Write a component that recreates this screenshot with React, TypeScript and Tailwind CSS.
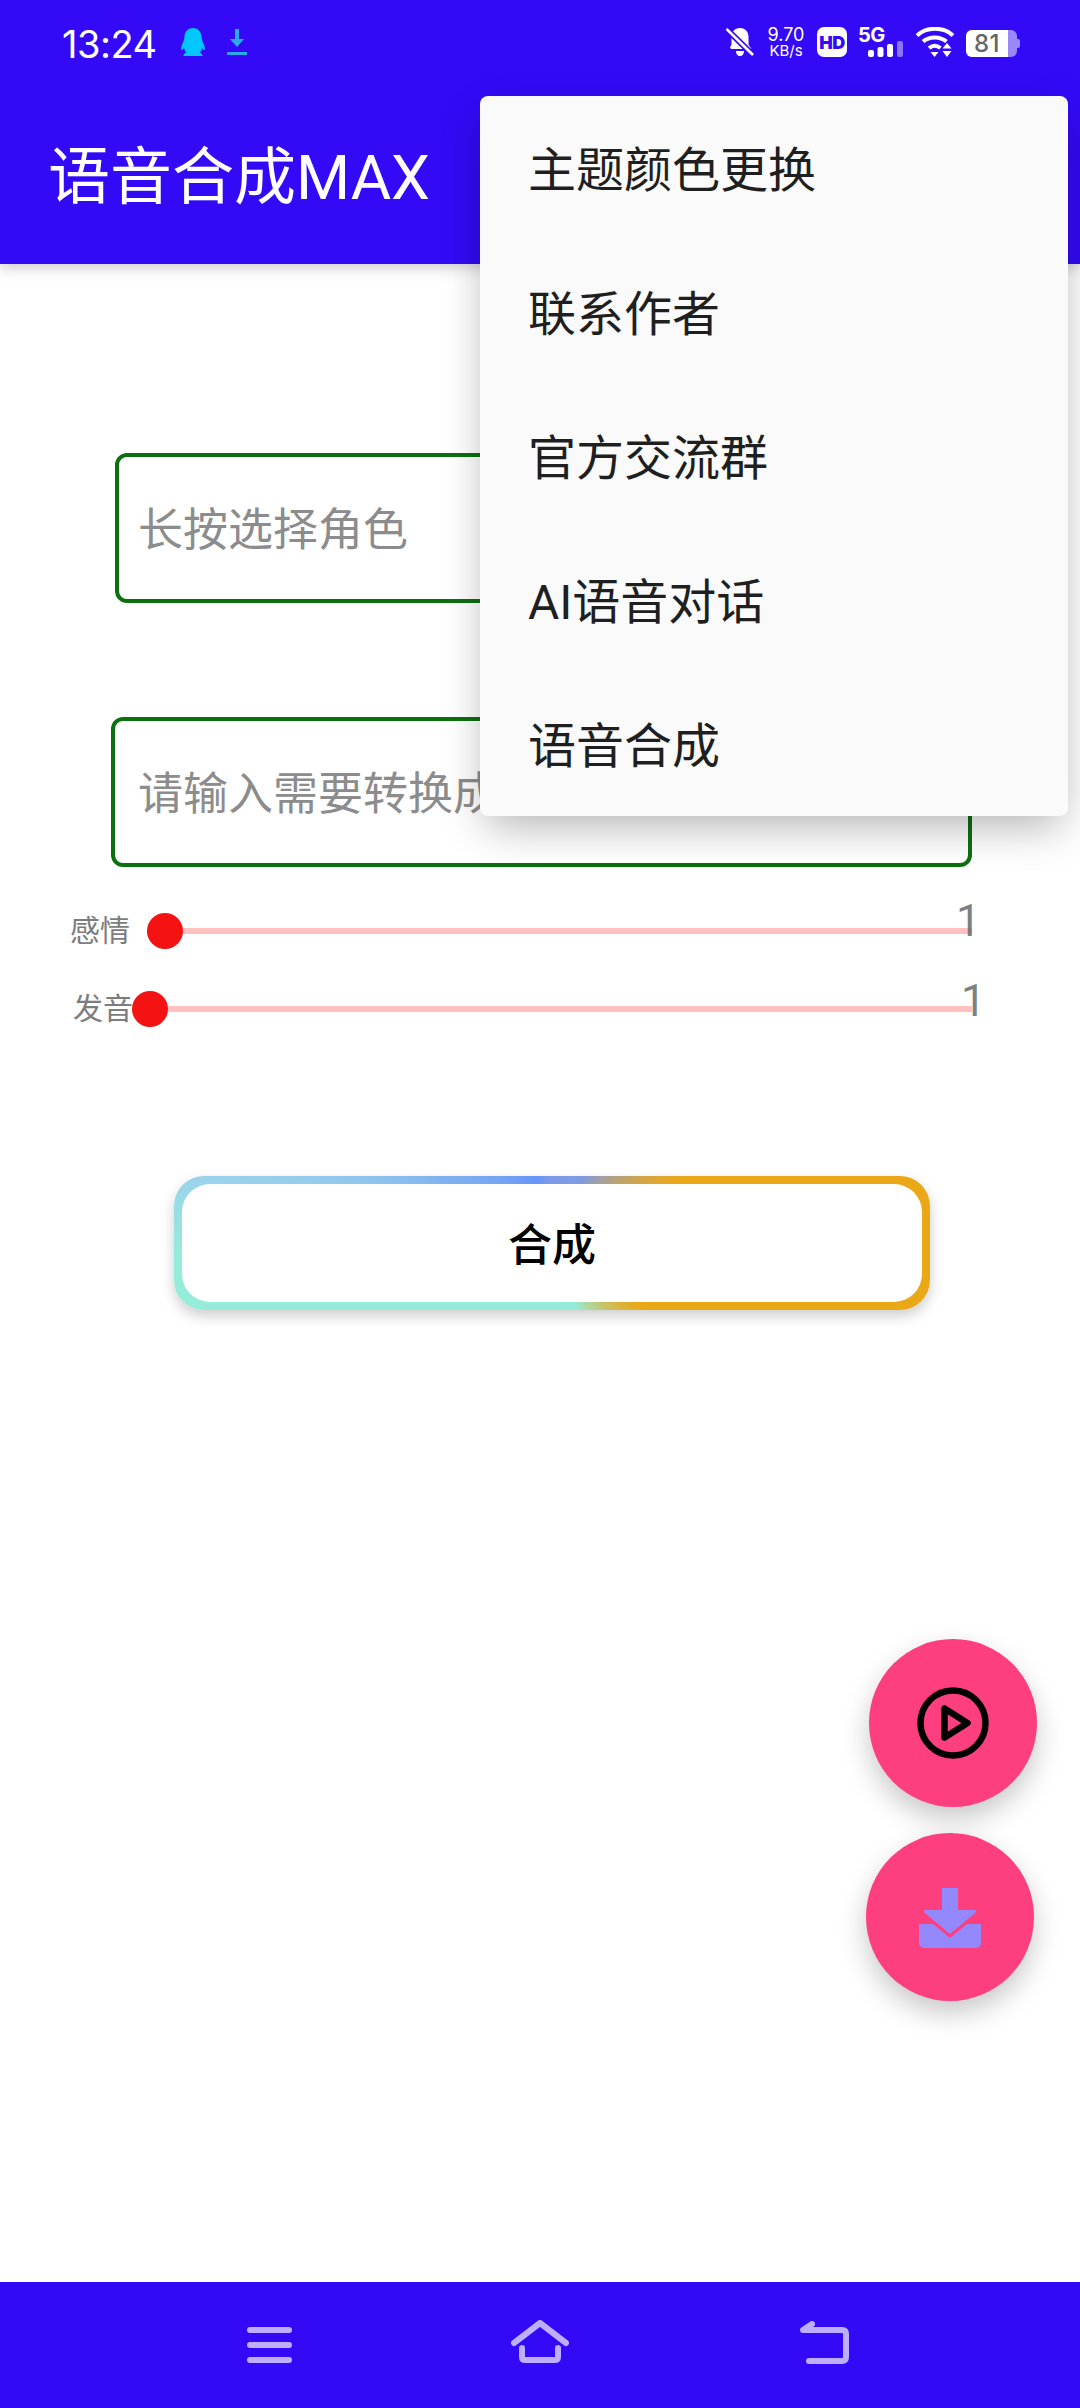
import React from "react";

const menuItems = ["主题颜色更换", "联系作者", "官方交流群", "AI语音对话", "语音合成"];

const StatusBar = () => (
  <div className="relative h-[96px] flex items-start">
    <div className="ml-[62px] mt-[22px] text-[38px] leading-[44px] text-white font-['Inter',sans-serif] tracking-[-0.5px]">
      13:24
    </div>
    {/* qq */}
    <svg className="ml-[22px] mt-[28px]" width="28" height="29" viewBox="0 0 28 29">
      <path
        d="M14 0c5.5 0 8.3 4 8.6 9.5.1 2 .6 3.2 1.9 6 1.2 2.700 1.500 5.200 1.300 6.300-.2.900-1.800-.2-2.900-1.700-.3 1.800-1 3.300-2.100 4.400 1.300.6 2.600 1.500 2.900 3.500H4.300c.3-2 1.600-2.900 2.900-3.500-1.100-1.100-1.800-2.600-2.100-4.400-1.100 1.500-2.700 2.600-2.900 1.700-.2-1.100.1-3.600 1.300-6.300 1.300-2.800 1.800-4 1.900-6C5.700 4 8.500 0 14 0z"
        fill="#00c8ff"
      />
    </svg>
    {/* download */}
    <svg className="ml-[20px] mt-[29px]" width="20" height="26" viewBox="0 0 20 26">
      <path d="M8 0h4v10h5l-7 8-7-8h5z" fill="#29abe8" />
      <rect x="0" y="23" width="20" height="3" fill="#29abe8" />
    </svg>
    <div className="ml-auto mr-[60px] mt-[27px] flex items-start text-white">
      {/* bell off */}
      <svg className="mt-[1px]" width="28" height="28" viewBox="0 0 28 28">
        <path
          d="M14 0c5.500 0 8.500 4 8.500 9v7.500l3 4.500H5.200L4 19.500l1.500-3V9C5.500 4 8.500 0 14 0zM10 23h8c0 3-1.500 5-4 5s-4-2-4-5z"
          fill="#fff"
        />
        <path d="M0.500 1L27 27" stroke="#3409f6" strokeWidth="6" />
        <path d="M0.500 1L27 27" stroke="#fff" strokeWidth="2.600" />
      </svg>
      <div className="ml-[13px] w-[38px] flex flex-col items-center font-['Inter',sans-serif]">
        <span className="text-[18px] leading-[17px] mt-[-1px]">9.70</span>
        <span className="text-[15px] leading-[14px] mt-[1px]">KB/s</span>
      </div>
      <div className="ml-[12px] w-[30px] h-[30px] bg-white rounded-[7px] flex items-center justify-center text-[#3409f6] text-[18px] font-black font-['Inter',sans-serif] tracking-[-0.5px]">
        HD
      </div>
      <div className="ml-[11px] w-[46px] h-[30px] relative">
        <span className="absolute left-0 top-[-2px] text-[20px] leading-[20px] font-bold font-['Inter',sans-serif] tracking-[-0.5px]">
          5G
        </span>
        <svg className="absolute left-[10px] top-[14px]" width="36" height="16" viewBox="0 0 36 16">
          <rect x="0" y="9" width="6" height="7" rx="2" fill="#fff" />
          <rect x="9.500" y="6" width="6" height="10" rx="2" fill="#fff" />
          <rect x="19" y="3" width="6" height="13" rx="2" fill="#fff" />
          <rect x="29" y="0" width="6" height="16" rx="2" fill="#8a75fb" />
        </svg>
      </div>
      {/* wifi */}
      <svg className="ml-[12px]" width="40" height="30" viewBox="0 0 40 30">
        <path d="M1 8.500C10.500-.5 27.500-.5 37 8.500" fill="none" stroke="#fff" strokeWidth="4" />
        <path d="M7 14.500c6.500-5.500 17-5.500 23.500 0" fill="none" stroke="#fff" strokeWidth="4" />
        <path d="M13 21c3.500-2.700 8-2.700 11.500 0" fill="none" stroke="#fff" strokeWidth="4" />
        <path d="M14.500 25h8l-4 5z" fill="#fff" />
        <path d="M31 16l4.500 5.500h-9zM31 30l-4.500-6h9z" fill="#fff" />
      </svg>
      {/* battery */}
      <div className="ml-[10px] mt-[3px] flex items-center">
        <div className="w-[51px] h-[27px] rounded-[6px] bg-[#9a88fb] overflow-hidden">
          <div className="w-[42px] h-full bg-white flex items-center justify-center text-[#666666] text-[24px] font-medium font-['Inter',sans-serif] tracking-[0.5px]">
            81
          </div>
        </div>
        <div className="w-[3px] h-[9px] rounded-r-[2px] bg-[#9a88fb]" />
      </div>
    </div>
  </div>
);

const Slider = ({ label, labelClass, trackClass, valueClass }: any) => (
  <div className="relative flex items-center h-[36px]">
    <span className={`shrink-0 whitespace-nowrap text-[30px] leading-[36px] text-[#7d7d7d] ${labelClass}`}>{label}</span>
    <div className={`relative shrink-0 h-[6px] bg-[#ffc0c0] ${trackClass}`}>
      <div className="absolute left-0 top-[-15px] w-[36px] h-[36px] rounded-full bg-[#f51212]" />
    </div>
    <span className={`absolute text-[44px] leading-[52px] text-[#6e6e6e]/90 font-['Roboto',sans-serif] ${valueClass}`}>
      1
    </span>
  </div>
);

const Fab = ({ className, children }: any) => (
  <div
    className={`absolute w-[168px] h-[168px] rounded-full bg-[#fe3f7f] shadow-[0_12px_28px_rgba(0,0,0,0.22)] flex items-center justify-center ${className}`}
  >
    {children}
  </div>
);

export default function App() {
  return (
    <div className="relative w-[1080px] h-[2408px] flex flex-col overflow-hidden bg-white font-['Roboto','Noto_Sans_CJK_SC',sans-serif]">
      <header className="h-[264px] bg-[#3409f6] shadow-[0_3px_14px_rgba(0,0,0,0.22)] z-10">
        <StatusBar />
        <div className="pl-[48px] pt-[46px] text-[62px] leading-[72px] text-white">语音合成MAX</div>
      </header>

      <main className="flex-1 flex flex-col">
        <div className="mt-[189px] ml-[115px] w-[857px] h-[150px] rounded-[12px] border-4 border-[#0d7010] flex items-center pl-[19px] pt-[5px] text-[45px] text-[#8c8c8c]">
          长按选择角色
        </div>
        <div className="mt-[114px] ml-[111px] w-[861px] h-[150px] rounded-[12px] border-4 border-[#0d7010] flex items-center pl-[23px] pt-[5px] text-[45px] text-[#8c8c8c] whitespace-nowrap overflow-hidden">
          请输入需要转换成
        </div>

        <div className="mt-[46px] ml-[70px]">
          <Slider label="感情" labelClass="w-[60px]" trackClass="ml-[17px] w-[825px]" valueClass="left-[886px] top-[-18px]" />
        </div>
        <div className="mt-[42px] ml-[73px]">
          <Slider label="发音" labelClass="w-[59px]" trackClass="w-[840px]" valueClass="left-[888px] top-[-16px]" />
        </div>

        <div className="mt-[149px] ml-[174px] w-[756px] h-[134px] rounded-[30px] p-[8px] bg-[conic-gradient(#7d9ae6_0deg,#7f9be4_25deg,#eaa817_64deg,#eaa817_126deg,#94ecd9_160deg,#94ecd9_268deg,#9bd3ec_280deg,#7fb0f0_300deg,#6695f7_345deg,#7d9ae6_360deg)] shadow-[0_6px_14px_rgba(0,0,0,0.2)]">
          <div className="w-full h-full rounded-[28px] bg-white flex items-center justify-center pt-[6px] text-[44px] font-medium text-black">
            合成
          </div>
        </div>
      </main>

      <nav className="h-[126px] bg-[#3409f6] flex items-start relative">
        <svg className="ml-[247px] mt-[45px]" width="45" height="36" viewBox="0 0 45 36" fill="#bdaeff">
          <rect x="0" y="0" width="45" height="6" rx="3" />
          <rect x="0" y="15" width="45" height="6" rx="3" />
          <rect x="0" y="30" width="45" height="6" rx="3" />
        </svg>
        <svg className="ml-[219px] mt-[38px]" width="58" height="43" viewBox="0 0 58 43" fill="none" stroke="#bdaeff" strokeWidth="6" strokeLinecap="round" strokeLinejoin="round">
          <path d="M3 23L29 3l26 20" />
          <path d="M11 28v9q0 3 3 3h30q3 0 3-3v-9" />
        </svg>
        <svg className="ml-[231px] mt-[39px]" width="49" height="43" viewBox="0 0 49 43" fill="none" stroke="#bdaeff" strokeWidth="6" strokeLinecap="round" strokeLinejoin="round">
          <path d="M9 40h33q4 0 4-4V13q0-4-4-4H3l9-6" />
        </svg>
      </nav>

      {/* overflow menu */}
      <div className="absolute left-[480px] top-[96px] z-20 w-[588px] h-[720px] rounded-[8px] bg-[#fafafa] shadow-[0_16px_44px_-6px_rgba(0,0,0,0.3)]">
        {menuItems.map((item) => (
          <div key={item} className="h-[144px] flex items-center pl-[48px] pt-[6px] text-[48px] text-[#1f1f1f]">
            {item}
          </div>
        ))}
      </div>

      <Fab className="left-[869px] top-[1639px]">
        <svg width="72" height="72" viewBox="0 0 72 72" fill="none" stroke="#000" strokeWidth="6.500" strokeLinejoin="round">
          <circle cx="36" cy="36" r="32.500" />
          <path d="M27.500 21.500v29L50.500 36z" />
        </svg>
      </Fab>
      <Fab className="left-[866px] top-[1833px]">
        <svg className="mt-[2px]" width="62" height="60" viewBox="0 0 62 60" fill="#9488ff">
          <path d="M23 0h16v22h17q2 1 0 3L31 46 6 25q-2-2 0-3h17z" />
          <path d="M0 36h14l17 14 17-14h14v18q0 6-6 6H6q-6 0-6-6z" />
        </svg>
      </Fab>
    </div>
  );
}
